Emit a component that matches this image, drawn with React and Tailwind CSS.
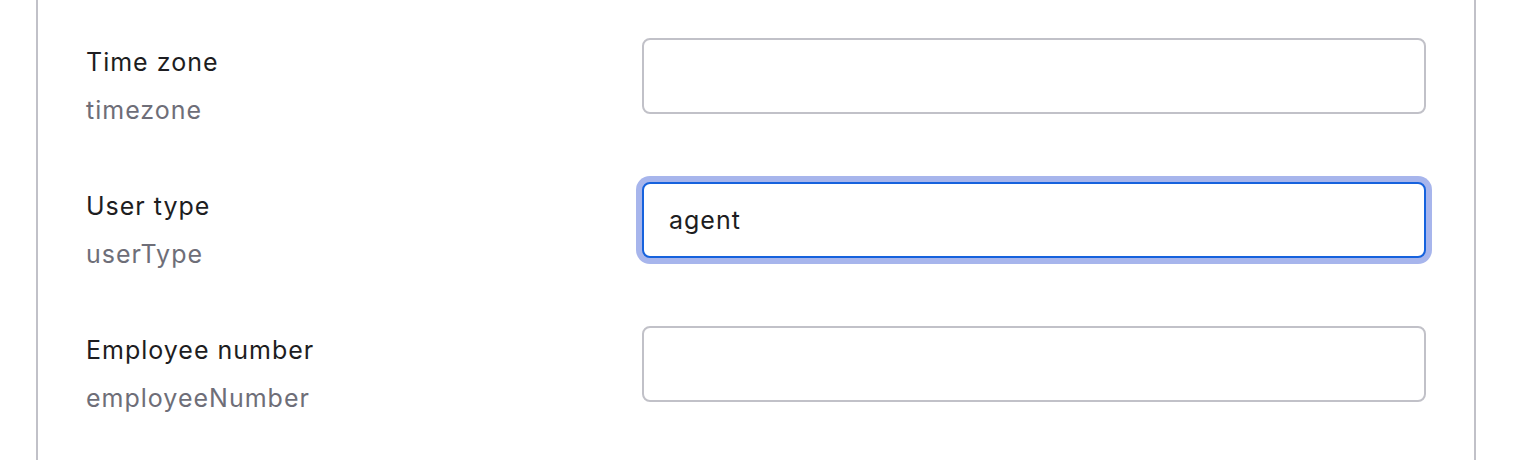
const fields = [
  { label: "Time zone", name: "timezone", value: "" },
  { label: "User type", name: "userType", value: "agent", focused: true },
  { label: "Employee number", name: "employeeNumber", value: "" },
];

const Field = ({ label, name, value, focused }) => (
  <div className="flex h-[76px] items-start">
    <div className="w-[556px] shrink-0 pt-[8px]">
      <div className="text-[25px] leading-[32px] tracking-[1px] text-[#1d1d21]">{label}</div>
      <div className="mt-[16px] text-[25px] leading-[32px] tracking-[1px] text-[#6e6e78]">{name}</div>
    </div>
    <input
      readOnly
      defaultValue={value}
      className={`h-[76px] w-[784px] rounded-[8px] border-2 bg-white px-[25px] text-[25px] tracking-[1px] text-[#1d1d21] outline-none ${
        focused
          ? "border-[#1662dd] ring-[6px] ring-[#a7b5ec]"
          : "border-[#c1c1c8]"
      }`}
    />
  </div>
);

export default function App() {
  return (
    <div
      className="h-[460px] w-[1520px] overflow-hidden bg-white"
      style={{ fontFamily: "Inter, 'Noto Sans', sans-serif" }}
    >
      <div className="ml-[36px] flex h-full w-[1440px] flex-col gap-[68px] border-x-2 border-[#c1c1c8] px-[48px] pt-[38px]">
        {fields.map((f) => (
          <Field key={f.name} {...f} />
        ))}
      </div>
    </div>
  );
}
